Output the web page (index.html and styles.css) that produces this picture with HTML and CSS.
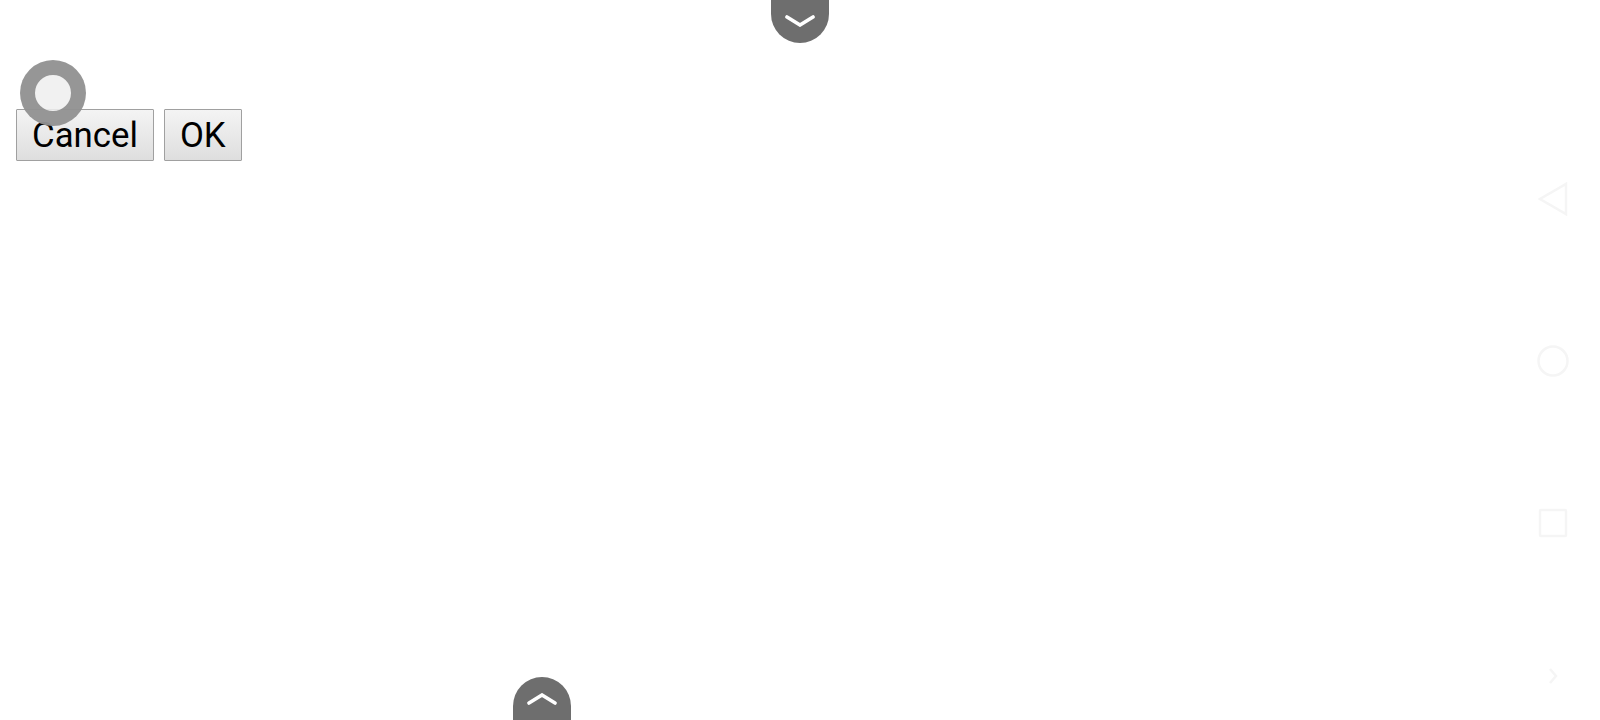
FILE: index.html
```html
<!DOCTYPE html>
<html lang="en">

<head>
  <meta charset="UTF-8">
  <meta name="viewport" content="width=device-width, initial-scale=1.0">
  <title>Document</title>
  <link rel="stylesheet" href="styles.css">
</head>

<body>
<div class="dialog_buttons">
  <button class="dialog_btn" type="button">Cancel</button>
  <button class="dialog_btn" type="button">OK</button>
</div>

<!-- touch indicator -->
<div class="touch_ring"></div>

<!-- system bar pull handles -->
<div class="bar_handle bar_handle_top">
  <svg width="30" height="12" viewBox="0 0 30 12"><path d="M2 2 L15 10 L28 2" /></svg>
</div>
<div class="bar_handle bar_handle_bottom">
  <svg width="30" height="12" viewBox="0 0 30 12"><path d="M2 10 L15 2 L28 10" /></svg>
</div>

<!-- faded navigation bar -->
<div class="nav_bar">
  <svg class="nav_icon" width="32" height="36" viewBox="0 0 32 36"><path d="M29 3 L29 33 L3 18 Z" /></svg>
  <svg class="nav_icon" width="32" height="36" viewBox="0 0 32 36"><circle cx="16" cy="18" r="14.5" /></svg>
  <svg class="nav_icon" width="32" height="36" viewBox="0 0 32 36"><rect x="3" y="5" width="26" height="26" rx="1" /></svg>
  <svg class="nav_icon nav_icon_small" width="32" height="36" viewBox="0 0 32 36"><path d="M13 11 L19 18 L13 25" /></svg>
</div>
</body>

</html>
```

FILE: styles.css
```css
html,
body {
  height: 100%;
}

body {
  margin: 0;
  padding: 109px 0 0 16px;
  box-sizing: border-box;
  background: #fff;
  overflow: hidden;
  font-family: 'Roboto', 'Liberation Sans', sans-serif;
}

.dialog_buttons {
  display: flex;
  gap: 10px;
}

.dialog_btn {
  height: 52px;
  padding: 0 15px;
  border: 1px solid #a0a0a0;
  border-radius: 1px;
  background: linear-gradient(#f4f4f4, #dedede);
  color: #000;
  font-family: inherit;
  font-size: 34.8px;
  line-height: 49px;
}

.touch_ring {
  position: absolute;
  top: 60px;
  left: 20px;
  width: 66px;
  height: 66px;
  box-sizing: border-box;
  border: 15px solid rgba(115, 115, 115, 0.72);
  border-radius: 50%;
  background: rgba(238, 238, 238, 0.85);
}

.bar_handle {
  position: absolute;
  width: 58px;
  display: flex;
  justify-content: center;
  background: #6e6e6e;
}

.bar_handle path {
  fill: none;
  stroke: #fff;
  stroke-width: 3.6;
  stroke-linecap: round;
}

.bar_handle_top {
  top: 0;
  left: 771px;
  height: 43px;
  padding-top: 15px;
  box-sizing: border-box;
  border-radius: 0 0 29px 29px;
}

.bar_handle_bottom {
  bottom: 0;
  left: 513px;
  height: 43px;
  padding-top: 16px;
  box-sizing: border-box;
  border-radius: 29px 29px 0 0;
}

.nav_bar {
  position: absolute;
  top: 181px;
  right: 31px;
  display: flex;
  flex-direction: column;
  gap: 126px;
}

.nav_icon {
  display: block;
}

.nav_icon path,
.nav_icon circle,
.nav_icon rect {
  fill: none;
  stroke: #f5f5f5;
  stroke-width: 2.5;
}

.nav_icon_small {
  margin-top: -9px;
}
```
